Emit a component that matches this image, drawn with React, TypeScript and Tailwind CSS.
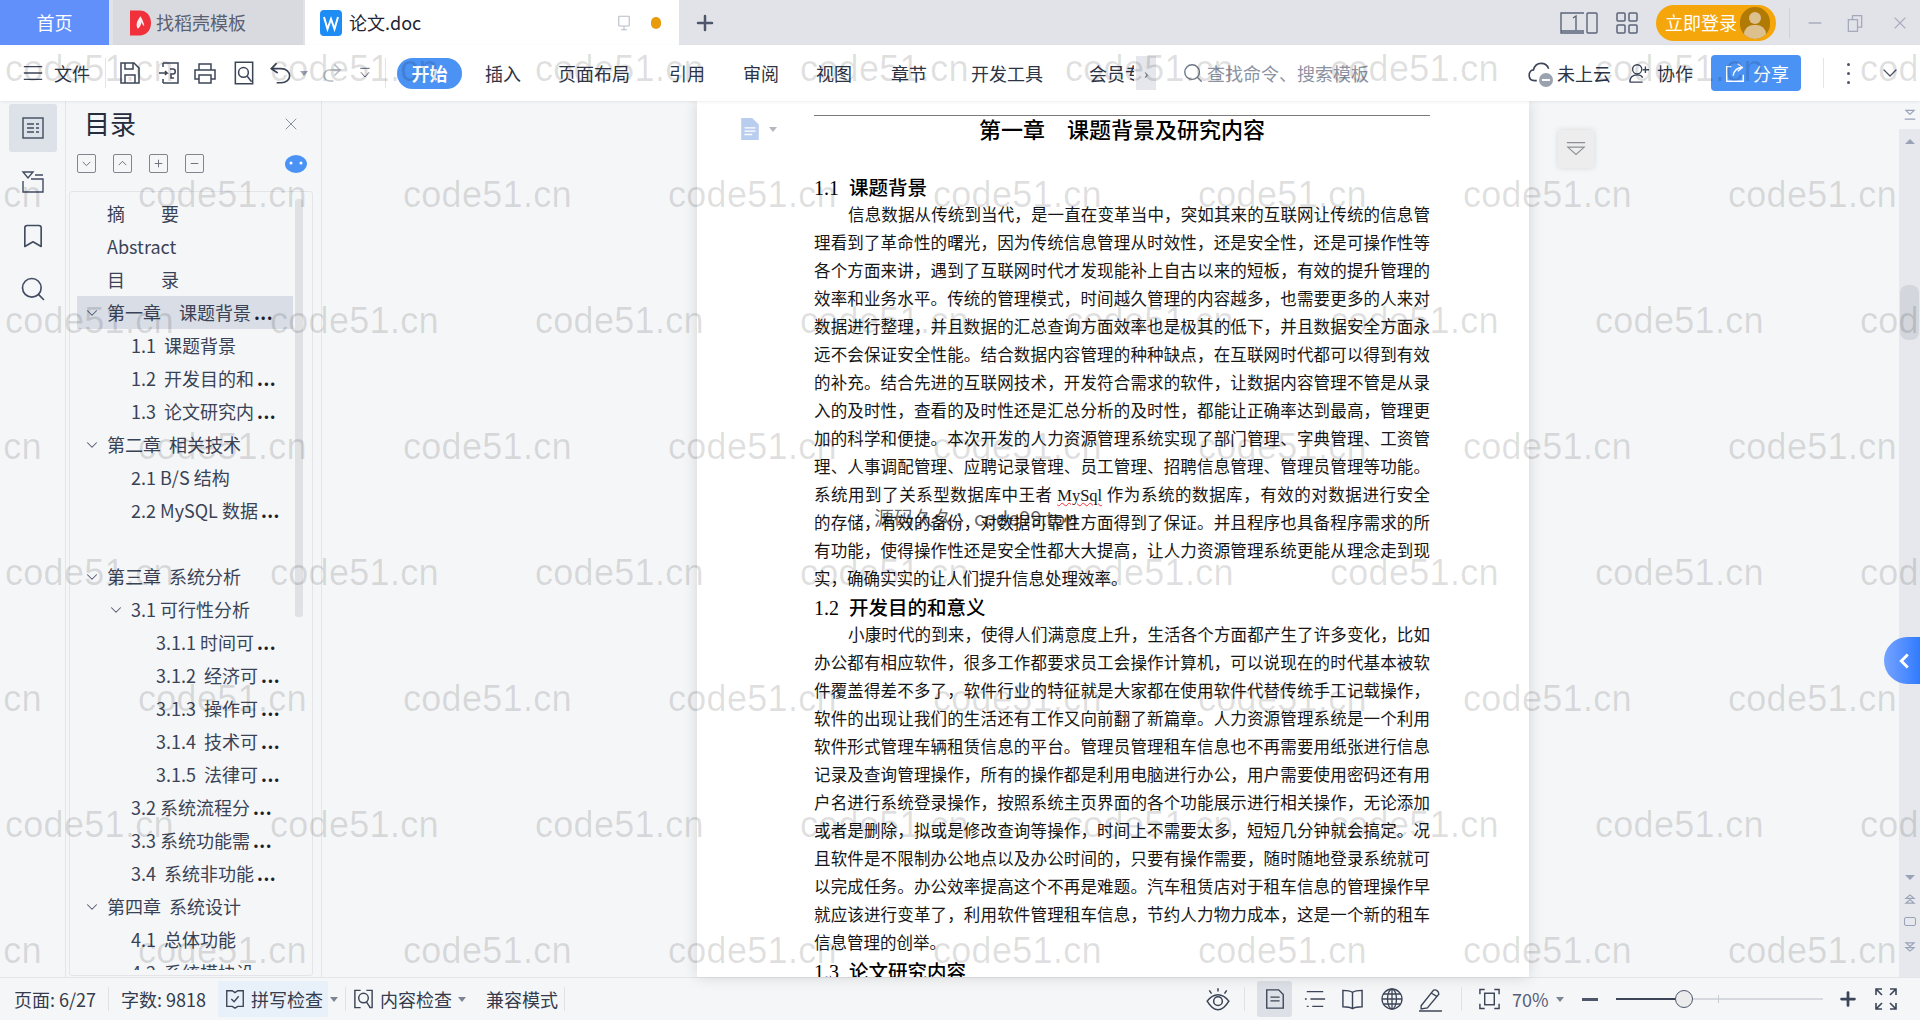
import { ChevronDown, X, Plus, Redo2, Search, Bookmark, Minus } from "lucide-react"

const SECTION_1 = [
  "理看到了革命性的曙光，因为传统信息管理从时效性，还是安全性，还是可操作性等",
  "各个方面来讲，遇到了互联网时代才发现能补上自古以来的短板，有效的提升管理的",
  "效率和业务水平。传统的管理模式，时间越久管理的内容越多，也需要更多的人来对",
  "数据进行整理，并且数据的汇总查询方面效率也是极其的低下，并且数据安全方面永",
  "远不会保证安全性能。结合数据内容管理的种种缺点，在互联网时代都可以得到有效",
  "的补充。结合先进的互联网技术，开发符合需求的软件，让数据内容管理不管是从录",
  "入的及时性，查看的及时性还是汇总分析的及时性，都能让正确率达到最高，管理更",
  "加的科学和便捷。本次开发的人力资源管理系统实现了部门管理、字典管理、工资管",
  "理、人事调配管理、应聘记录管理、员工管理、招聘信息管理、管理员管理等功能。",
]

const SECTION_1_END = [
  "的存储，有效的备份，对数据可靠性方面得到了保证。并且程序也具备程序需求的所",
  "有功能，使得操作性还是安全性都大大提高，让人力资源管理系统更能从理念走到现",
]

const SECTION_2 = [
  "办公都有相应软件，很多工作都要求员工会操作计算机，可以说现在的时代基本被软",
  "件覆盖得差不多了，软件行业的特征就是大家都在使用软件代替传统手工记载操作，",
  "软件的出现让我们的生活还有工作又向前翻了新篇章。人力资源管理系统是一个利用",
  "软件形式管理车辆租赁信息的平台。管理员管理租车信息也不再需要用纸张进行信息",
  "记录及查询管理操作，所有的操作都是利用电脑进行办公，用户需要使用密码还有用",
  "户名进行系统登录操作，按照系统主页界面的各个功能展示进行相关操作，无论添加",
  "或者是删除，拟或是修改查询等操作，时间上不需要太多，短短几分钟就会搞定。况",
  "且软件是不限制办公地点以及办公时间的，只要有操作需要，随时随地登录系统就可",
  "以完成任务。办公效率提高这个不再是难题。汽车租赁店对于租车信息的管理操作早",
  "就应该进行变革了，利用软件管理租车信息，节约人力物力成本，这是一个新的租车",
]

type TocRow = { level: 0 | 1 | 2; text: string; more?: boolean; open?: boolean; active?: boolean }

const TOC: TocRow[] = [
  { level: 0, text: "摘　　要" },
  { level: 0, text: "Abstract" },
  { level: 0, text: "目　　录" },
  { level: 0, text: "第一章　课题背景", more: true, open: true, active: true },
  { level: 1, text: "1.1  课题背景" },
  { level: 1, text: "1.2  开发目的和", more: true },
  { level: 1, text: "1.3  论文研究内", more: true },
  { level: 0, text: "第二章  相关技术", open: true },
  { level: 1, text: "2.1 B/S 结构" },
  { level: 1, text: "2.2 MySQL 数据", more: true },
  { level: 1, text: "" },
  { level: 0, text: "第三章  系统分析", open: true },
  { level: 1, text: "3.1 可行性分析", open: true },
  { level: 2, text: "3.1.1 时间可", more: true },
  { level: 2, text: "3.1.2  经济可", more: true },
  { level: 2, text: "3.1.3  操作可", more: true },
  { level: 2, text: "3.1.4  技术可", more: true },
  { level: 2, text: "3.1.5  法律可", more: true },
  { level: 1, text: "3.2 系统流程分", more: true },
  { level: 1, text: "3.3 系统功能需", more: true },
  { level: 1, text: "3.4  系统非功能", more: true },
  { level: 0, text: "第四章  系统设计", open: true },
  { level: 1, text: "4.1  总体功能" },
  { level: 1, text: "4.2  系统模块设" },
]

const LEVEL_PADDING = { 0: "pl-[30px]", 1: "pl-[54px]", 2: "pl-[79px]" }

const WATERMARK_ROWS = [0, 1, 2, 3, 4, 5, 6, 7]
const WATERMARK_COLS = [0, 1, 2, 3, 4, 5, 6, 7, 8]

function Line({ className = "", ...rest }: React.SVGProps<SVGSVGElement>) {
  return (
    <svg
      viewBox="0 0 24 24"
      fill="none"
      stroke="currentColor"
      strokeWidth="1.5"
      className={className}
      aria-hidden="true"
      {...rest}
    />
  )
}

function Caret({ className = "" }: { className?: string }) {
  return <span className={`inline-block w-0 h-0 border-x-[4px] border-x-transparent border-t-[5px] border-t-[#7d8595] ${className}`} />
}

function TabBar() {
  return (
    <div className="flex items-stretch h-[45px] bg-[#e2e3e8] shrink-0 text-[18px]">
      <div className="w-[109px] bg-[#6290fb] text-white flex items-center justify-center">首页</div>
      <div className="ml-[4px] w-[190px] bg-[#d9dadf] flex items-center pl-[17px] text-[#596072]">
        <svg viewBox="0 0 22 26" className="w-[21px] h-[26px] shrink-0" aria-hidden="true">
          <path d="M0 0h10c7 0 12 5 12 13s-5 13-12 13H0z" fill="#f0303a" />
          <path d="M11 6c-4 5-5 9-3 13 2-1 4-4 4-7 1 3 2 4 3 4-1-4-2-7-4-10z" fill="#fff" opacity="0.9" />
        </svg>
        <span className="ml-[5px]">找稻壳模板</span>
      </div>
      <div className="ml-[2px] w-[374px] bg-white flex items-center pl-[15px] text-[#1f2533]">
        <svg viewBox="0 0 22 26" className="w-[22px] h-[26px] shrink-0" aria-hidden="true">
          <rect width="22" height="26" rx="4" fill="#1e8cf5" />
          <path d="M4 7l3.5 12L11 9l3.5 10L18 7" fill="none" stroke="#fff" strokeWidth="2" />
        </svg>
        <span className="ml-[7px]">论文.doc</span>
        <Line className="ml-[194px] w-[18px] h-[20px] text-[#b8bdcb]">
          <rect x="5" y="3" width="14" height="13" rx="1" />
          <path d="M12 16v5M8 21h8" />
        </Line>
        <span className="ml-[18px] w-[10px] h-[12px] rounded-full bg-[#e89c0c]" />
      </div>
      <div className="ml-[14px] flex items-center">
        <Plus className="w-[24px] h-[24px] text-[#4e566c]" strokeWidth={2.5} />
      </div>
      <Line className="ml-[843px] self-center w-[38px] h-[24px] text-[#5b6478]" viewBox="0 0 38 24" strokeWidth="1.4">
        <path d="M24 2H1v20h23M1 20h23" />
        <rect x="27" y="2" width="10" height="20" rx="1" />
        <path d="M13 7l3-2v14" />
      </Line>
      <Line className="ml-[17px] self-center w-[24px] h-[24px] text-[#5b6478]">
        <rect x="2" y="2" width="8" height="8" rx="1" />
        <rect x="14" y="2" width="8" height="8" rx="1" />
        <rect x="2" y="14" width="8" height="8" rx="1" />
        <rect x="14" y="14" width="8" height="8" rx="1" />
      </Line>
      <div className="ml-[17px] self-center w-[120px] h-[36px] rounded-full bg-[#f5a60a] flex items-center pl-[9px] text-white">
        <span className="w-[75px]">立即登录</span>
        <span className="relative w-[30px] h-[32px] rounded-full bg-[#b07a04] overflow-hidden">
          <span className="absolute left-[9px] top-[5px] w-[12px] h-[12px] rounded-full bg-[#dcc08e]" />
          <span className="absolute left-[4px] top-[18px] w-[22px] h-[18px] rounded-full bg-[#dcc08e]" />
        </span>
      </div>
      <span className="ml-[13px] self-center w-px h-[30px] bg-[#d0d2d8]" />
      <Minus className="ml-[15px] self-center w-[20px] h-[20px] text-[#a9afbf]" />
      <Line className="ml-[20px] self-center w-[20px] h-[20px] text-[#a3a9ba]">
        <rect x="4" y="8" width="11" height="14" />
        <path d="M9 8V3h11v14h-5" />
      </Line>
      <X className="ml-[25px] self-center w-[20px] h-[20px] text-[#a9afbf]" strokeWidth={1.3} />
    </div>
  )
}

function Toolbar() {
  return (
    <div className="relative z-10 flex items-center h-[56px] bg-white shrink-0 text-[18px] text-[#2d3445] shadow-[0_1px_3px_rgba(0,0,0,0.07)]">
      <Line className="ml-[22px] w-[22px] h-[22px] text-[#3c4557]">
        <path d="M2 5h20M2 12h20M2 19h20" />
      </Line>
      <span className="ml-[10px] w-[36px]">文件</span>
      <span className="ml-[15px] w-px h-[30px] bg-[#e3e5ea]" />
      <Line className="ml-[12px] w-[24px] h-[26px] text-[#3c4557]">
        <path d="M3 2h13l5 5v15H3z" />
        <path d="M7 2v6h8V2M7 22v-8h10v8" />
      </Line>
      <Line className="ml-[15px] w-[24px] h-[26px] text-[#3c4557]">
        <path d="M6 2h15v20H6M6 2v4M6 18v4" />
        <path d="M2 12h8l-2-2M10 12l-2 2M13 8h3c3 0 3 5 0 5h-2v4h3" />
      </Line>
      <Line className="ml-[12px] w-[24px] h-[26px] text-[#3c4557]">
        <path d="M6 9V3h12v6M6 18H2V9h20v9h-4" />
        <rect x="6" y="14" width="12" height="8" />
      </Line>
      <Line className="ml-[14px] w-[26px] h-[28px] text-[#3c4557]" strokeWidth="1.4">
        <path d="M4 2h16v20H4z" />
        <circle cx="11.500" cy="11.500" r="4.500" />
        <path d="M15 15l4 5" />
      </Line>
      <Line className="ml-[11px] w-[26px] h-[28px] text-[#3c4557]">
        <path d="M8 3L3 8l6 4" />
        <path d="M3 8h9c5 0 8 3 8 6.500S17 21 12 21H8" />
      </Line>
      <Caret className="ml-[6px] !border-t-[#a0a6b3]" />
      <Redo2 className="ml-[12px] w-[24px] h-[26px] text-[#b9bdc6]" strokeWidth={1.5} />
      <Line className="ml-[13px] w-[16px] h-[18px] text-[#5b6478]">
        <path d="M5 5h14M6 11l6 7 6-7" />
      </Line>
      <span className="ml-[12px] w-px h-[30px] bg-[#e3e5ea]" />
      <span className="ml-[11px] w-[65px] h-[31px] rounded-full bg-[#4a92f4] text-white font-bold flex items-center justify-center">开始</span>
      <span className="ml-[23px] w-[36px]">插入</span>
      <span className="ml-[37px] w-[72px]">页面布局</span>
      <span className="ml-[39px] w-[36px]">引用</span>
      <span className="ml-[38px] w-[36px]">审阅</span>
      <span className="ml-[37px] w-[36px]">视图</span>
      <span className="ml-[39px] w-[36px]">章节</span>
      <span className="ml-[44px] w-[72px]">开发工具</span>
      <span className="ml-[46px] w-[45px] overflow-hidden whitespace-nowrap">会员专享</span>
      <span className="ml-[2px] w-[20px] h-[34px] bg-[#e5e7ec] flex items-center justify-center text-[14px] text-[#4c5465]">›</span>
      <Search className="ml-[26px] w-[22px] h-[22px] text-[#6e7686]" strokeWidth={1.5} />
      <span className="ml-[3px] w-[162px] whitespace-nowrap text-[#8b93a3]">查找命令、搜索模板</span>
      <div className="relative ml-[158px] w-[26px] h-[28px] text-[#3c4557]">
        <Line className="w-[26px] h-[26px]">
          <path d="M9 20H7c-3 0-5-2-5-5s2-5 4-5c1-4 4-6 7-6s6 2 7 5" />
        </Line>
        <span className="absolute right-0 bottom-0 w-[14px] h-[14px] rounded-full bg-[#9aa2b0] flex items-center justify-center">
          <span className="w-[8px] h-[2px] bg-white" />
        </span>
      </div>
      <span className="ml-[4px] w-[54px]">未上云</span>
      <Line className="ml-[17px] w-[22px] h-[24px] text-[#3c4557]">
        <circle cx="10" cy="8" r="5" />
        <path d="M2 22c0-5 3-8 8-8 3 0 5 1 6 3M2 22h14M19 5v7M16 8.500h7" />
      </Line>
      <span className="ml-[7px] w-[36px]">协作</span>
      <div className="ml-[18px] w-[90px] h-[36px] rounded-[4px] bg-[#4a92f4] text-white flex items-center pl-[13px]">
        <Line className="w-[22px] h-[22px]">
          <path d="M8 5H3v16h18v-7M10 15c1-6 5-9 10-9M15 2l5 4-5 4" />
        </Line>
        <span className="ml-[7px]">分享</span>
      </div>
      <span className="ml-[22px] w-px h-[30px] bg-[#e3e5ea]" />
      <span className="ml-[23px] flex flex-col gap-[6px]">
        <span className="w-[3px] h-[3px] rounded-full bg-[#4c5465]" />
        <span className="w-[3px] h-[3px] rounded-full bg-[#4c5465]" />
        <span className="w-[3px] h-[3px] rounded-full bg-[#4c5465]" />
      </span>
      <ChevronDown className="ml-[28px] w-[24px] h-[24px] text-[#4c5465]" strokeWidth={1.3} />
    </div>
  )
}

function Rail() {
  return (
    <div className="w-[66px] shrink-0 border-r border-[#e3e5ea] flex flex-col items-center pt-[3px] text-[#414b60]">
      <div className="w-[48px] h-[48px] rounded-[3px] bg-[#dde1e8] flex items-center justify-center">
        <Line className="w-[24px] h-[26px]" strokeWidth="1.4">
          <rect x="2" y="2" width="20" height="20" />
          <path d="M6 8h7M15 8h3M6 12h7M15 12h3M6 16h7M15 16h3" />
        </Line>
      </div>
      <Line className="mt-[18px] w-[24px] h-[24px]" strokeWidth="1.4">
        <path d="M2 2h10L7 8zM14 5h8M2 11v11h20V9H10" />
      </Line>
      <Bookmark className="mt-[28px] w-[28px] h-[28px]" strokeWidth={1.4} />
      <Search className="mt-[25px] w-[28px] h-[28px]" strokeWidth={1.4} />
    </div>
  )
}

function SquareIcon({ children }: { children: React.ReactNode }) {
  return (
    <span className="w-[19px] h-[19px] rounded-[2px] border border-[#80858e] flex items-center justify-center text-[#6b7079]">
      <Line className="w-[13px] h-[13px]" strokeWidth="1.8">{children}</Line>
    </span>
  )
}

function TocPanel() {
  return (
    <div className="w-[256px] shrink-0 border-r border-[#e3e5ea] flex flex-col">
      <div className="h-[42px] flex items-center pl-[18px] pr-[20px] justify-between">
        <span className="text-[26px] text-[#252d3d]">目录</span>
        <X className="mt-[4px] w-[20px] h-[20px] text-[#7d8595]" strokeWidth={1.1} />
      </div>
      <div className="h-[48px] flex items-start pl-[11px] pt-[11px]">
        <span className="flex gap-[17px]">
          <SquareIcon><path d="M5 9l7 7 7-7" /></SquareIcon>
          <SquareIcon><path d="M5 15l7-7 7 7" /></SquareIcon>
          <SquareIcon><path d="M12 5v14M5 12h14" /></SquareIcon>
          <SquareIcon><path d="M5 12h14" /></SquareIcon>
        </span>
        <svg viewBox="0 0 22 18" className="ml-[81px] mt-[1px] w-[22px] h-[18px]" aria-hidden="true">
          <ellipse cx="11" cy="9" rx="11" ry="9" fill="#4a92f4" />
          <circle cx="6" cy="8" r="1.500" fill="#fff" />
          <circle cx="16" cy="8" r="1.500" fill="#fff" />
        </svg>
      </div>
      <div className="ml-[3px] w-[244px] h-[785px] border border-[#e3e5ea] rounded-[3px] flex items-start pl-[7px] pt-[5px] text-[18px] text-[#3a4356]">
        <div className="w-[216px] h-[773px] overflow-hidden">
          {TOC.map((row, i) => (
            <div
              key={i}
              className={`h-[33px] flex items-center whitespace-pre ${LEVEL_PADDING[row.level]} ${row.active ? "bg-[#d8dde6]" : ""}`}
            >
              {row.open && (
                <ChevronDown className="-ml-[24px] mr-[6px] w-[18px] h-[18px] shrink-0 text-[#4e566c]" strokeWidth={1.4} />
              )}
              <span>{row.text}</span>
              {row.more && <span className="ml-[3px] font-bold text-[#1a1f2b] tracking-[0.5px]">...</span>}
            </div>
          ))}
        </div>
        <div className="ml-[2px] mt-[2px] w-[8px] h-[418px] rounded-[3px] bg-[#dfe1e5]" />
      </div>
    </div>
  )
}

function BodyLine({ children }: { children: React.ReactNode }) {
  return <p className="h-[28px] leading-[28px] text-justify [text-align-last:justify] overflow-hidden">{children}</p>
}

function SectionTitle({ num, title }: { num: string; title: string }) {
  return (
    <h2 className="h-[28px] leading-[28px] text-[19.5px] font-medium text-black">
      <span className="text-[20px]">{num}</span>
      <span className="ml-[10px]">{title}</span>
    </h2>
  )
}

function Page() {
  return (
    <div className="relative ml-[375px] w-[832px] h-full bg-white overflow-hidden pl-[117px] pr-[99px] shadow-[0_0_14px_rgba(0,0,0,0.14)] [font-family:'Liberation_Serif','Noto_Sans_CJK_SC',serif] text-[16.500px] text-[#161616]">
      <svg viewBox="0 0 16 20" className="absolute left-[44px] top-[17px] w-[18px] h-[22px]" aria-hidden="true">
        <path d="M0 0h10l6 6v14H0z" fill="#b9cdee" />
        <path d="M3 9h10M3 12h10M3 15h7" stroke="#fff" strokeWidth="1.2" />
      </svg>
      <Caret className="absolute left-[72px] top-[26px] !border-t-[#b4b8c0]" />
      <div className="mt-[14px] h-px bg-[#7a7a7a]" />
      <h1 className="h-[29px] leading-[29px] mb-[29px] text-center text-[22px] font-medium text-black whitespace-pre">第一章　课题背景及研究内容</h1>

      <SectionTitle num="1.1" title="课题背景" />
      <div className="pl-[34px]"><BodyLine>信息数据从传统到当代，是一直在变革当中，突如其来的互联网让传统的信息管</BodyLine></div>
      {SECTION_1.map((t) => <BodyLine key={t}>{t}</BodyLine>)}
      <BodyLine>
        系统用到了关系型数据库中王者 <span className="underline decoration-wavy decoration-red-500 decoration-1">MySql</span> 作为系统的数据库，有效的对数据进行安全
      </BodyLine>
      {SECTION_1_END.map((t) => <BodyLine key={t}>{t}</BodyLine>)}
      <p className="h-[28px] leading-[28px]">实，确确实实的让人们提升信息处理效率。</p>

      <SectionTitle num="1.2" title="开发目的和意义" />
      <div className="pl-[34px]"><BodyLine>小康时代的到来，使得人们满意度上升，生活各个方面都产生了许多变化，比如</BodyLine></div>
      {SECTION_2.map((t) => <BodyLine key={t}>{t}</BodyLine>)}
      <p className="h-[28px] leading-[28px]">信息管理的创举。</p>

      <SectionTitle num="1.3" title="论文研究内容" />

      <span className="absolute left-[177px] top-[403px] text-[20px] leading-[28px] text-black/60 [font-family:'Noto_Sans_CJK_SC',sans-serif]">源码久久：code99.top</span>
    </div>
  )
}

function DocScrollbar() {
  return (
    <div className="w-[21px] shrink-0 flex flex-col text-[#9aa2b8]">
      <div className="h-[28px] flex items-center justify-center">
        <Line className="w-[14px] h-[14px]" strokeWidth="2">
          <path d="M5 4h14l-7 7zM3 19h18" />
        </Line>
      </div>
      <div className="flex-1 bg-[#e6e8ed] flex flex-col items-center">
        <span className="mt-[10px] w-0 h-0 border-x-[5px] border-x-transparent border-b-[5px] border-b-[#9aa2b8]" />
        <span className="mt-[141px] w-[19px] h-[55px] rounded-[8px] bg-[#d3d6dd]" />
        <span className="mt-[535px] w-0 h-0 border-x-[5px] border-x-transparent border-t-[5px] border-t-[#9aa2b8]" />
        <Line className="mt-[12px] w-[14px] h-[14px]" strokeWidth="2">
          <path d="M5 11l7-6 7 6zM5 19l7-6 7 6z" />
        </Line>
        <span className="mt-[11px] w-[12px] h-[9px] rounded-[2px] border-[1.5px] border-[#9aa2b8]" />
        <Line className="mt-[14px] w-[14px] h-[14px]" strokeWidth="2">
          <path d="M5 5l7 6 7-6zM5 13l7 6 7-6z" />
        </Line>
      </div>
    </div>
  )
}

function Main() {
  return (
    <div className="flex flex-1 min-h-0 bg-[#f5f6f8] [font-family:'Noto_Sans_CJK_SC',sans-serif]">
      <Rail />
      <TocPanel />
      <div className="relative flex-1 min-w-0">
        <Page />
        <div className="absolute left-[1236px] top-[29px] w-[36px] h-[38px] bg-[#ededee] shadow-[0_0_6px_rgba(0,0,0,0.12)] flex items-center justify-center text-[#8d8f94]">
          <Line className="w-[22px] h-[22px]" strokeWidth="1.2">
            <path d="M2 5h20M3 10h18l-9 8z" />
          </Line>
        </div>
      </div>
      <DocScrollbar />
    </div>
  )
}

function StatusBar() {
  return (
    <div className="flex items-center h-[43px] bg-[#f5f6f8] border-t border-[#e3e5e9] shrink-0 text-[18px] text-[#333b4c]">
      <span className="ml-[14px] w-[86px] whitespace-nowrap">页面: 6/27</span>
      <span className="ml-[8px] w-px h-[24px] bg-[#e0e2e7]" />
      <span className="ml-[12px] w-[89px] whitespace-nowrap">字数: 9818</span>
      <div className="ml-[8px] w-[110px] h-[36px] bg-[#e8f0fa] flex items-center pl-[6px]">
        <Line className="w-[22px] h-[26px] shrink-0 text-[#3c4557]">
          <path d="M3 3h6l3 2 3-2h6v17h-6l-3 2-3-2H3z" />
          <path d="M8 12l3 3 5-6" />
        </Line>
        <span className="ml-[5px] whitespace-nowrap">拼写检查</span>
      </div>
      <Caret className="ml-[2px]" />
      <span className="ml-[7px] w-px h-[24px] bg-[#e0e2e7]" />
      <Line className="ml-[6px] w-[23px] h-[26px] shrink-0 text-[#3c4557]">
        <path d="M9 3H3v18h6M15 3h6v18h-3" />
        <circle cx="12" cy="11" r="5" />
        <path d="M15 15l4 6" />
      </Line>
      <span className="ml-[5px] w-[72px] whitespace-nowrap">内容检查</span>
      <Caret className="ml-[6px]" />
      <span className="ml-[20px] w-[72px] whitespace-nowrap">兼容模式</span>
      <span className="ml-[6px] w-px h-[24px] bg-[#e0e2e7]" />

      <Line className="ml-[640px] w-[26px] h-[26px] shrink-0 text-[#3c4557]" strokeWidth="1.4">
        <path d="M2 14c3-4 6-6 10-6s7 2 10 6c-3 5-6 8-10 8s-7-3-10-8z" />
        <circle cx="12" cy="14" r="4" />
        <path d="M4 4l2 3M12 2v3M20 4l-2 3" />
      </Line>
      <span className="ml-[13px] w-px h-[24px] bg-[#e0e2e7]" />
      <div className="ml-[12px] w-[35px] h-[36px] rounded-[3px] bg-[#dde0e6] flex items-center justify-center">
        <Line className="w-[22px] h-[26px] text-[#3c4557]">
          <path d="M3 2h13l5 5v15H3zM7 10h10M7 14h10" />
        </Line>
      </div>
      <Line className="ml-[12px] w-[22px] h-[24px] shrink-0 text-[#3c4557]">
        <path d="M3 4h18M1 12h2M7 12h16M3 20h2M9 20h12M1 4h0" />
      </Line>
      <Line className="ml-[15px] w-[23px] h-[26px] shrink-0 text-[#3c4557]">
        <path d="M12 5c-3-2-6-2-10-2v17c4 0 7 0 10 2 3-2 6-2 10-2V3c-4 0-7 0-10 2zM12 5v17" />
      </Line>
      <Line className="ml-[16px] w-[24px] h-[24px] shrink-0 text-[#3c4557]" strokeWidth="1.3">
        <circle cx="12" cy="12" r="10" />
        <ellipse cx="12" cy="12" rx="4.500" ry="10" />
        <path d="M12 2v20M2 12h20M3.500 7h17M3.500 17h17" />
      </Line>
      <Line className="ml-[14px] w-[25px] h-[25px] shrink-0 text-[#3c4557]" strokeWidth="1.3">
        <path d="M3 18L15 3c2-1 5 1 5 4L9 20l-6 1zM13 6l5 3M1 23h22" />
      </Line>
      <span className="ml-[18px] w-px h-[24px] bg-[#e0e2e7]" />
      <Line className="ml-[16px] w-[23px] h-[24px] shrink-0 text-[#3c4557]" strokeWidth="1.5">
        <path d="M2 7V2h5M17 2h5v5M22 17v5h-5M7 22H2v-5" />
        <rect x="7" y="6" width="10" height="12" />
      </Line>
      <span className="ml-[11px] w-[38px] whitespace-nowrap text-[#56607a]">70%</span>
      <Caret className="ml-[6px]" />
      <span className="ml-[18px] w-[16px] h-[3px] bg-[#4e566c]" />
      <div className="relative ml-[18px] w-[207px] h-[2px] bg-[#d6d9df]">
        <div className="w-[60px] h-[2px] bg-[#3c4557]" />
        <span className="absolute left-[102px] -top-[3px] w-px h-[8px] bg-[#c8ccd3]" />
        <span className="absolute left-[59px] -top-[8px] w-[18px] h-[18px] rounded-full border border-[#4e566c] bg-[#ececec]" />
      </div>
      <Plus className="ml-[14px] w-[22px] h-[22px] text-[#3c4557]" strokeWidth={3} />
      <Line className="ml-[15px] w-[24px] h-[24px] shrink-0 text-[#3c4557]" strokeWidth="1.6">
        <path d="M2 8V2h6M2 2l6 6M22 8V2h-6M22 2l-6 6M2 16v6h6M2 22l6-6M22 16v6h-6M22 22l-6-6" />
      </Line>
    </div>
  )
}

export default function App() {
  return (
    <div className="relative w-screen h-screen overflow-hidden flex flex-col bg-white [font-family:'Noto_Sans_CJK_SC',sans-serif]">
      <TabBar />
      <Toolbar />
      <Main />
      <StatusBar />

      {/* blue tab over the scrollbar */}
      <div className="absolute right-0 top-[637px] z-20 w-[36px] h-[47px] rounded-l-full bg-gradient-to-r from-[#74a2ff] to-[#2f7bff] flex items-center justify-end pr-[4px] text-white">
        <Line className="w-[22px] h-[22px]" strokeWidth="3.2">
          <path d="M15 5l-7 7 7 7" />
        </Line>
      </div>

      {/* watermark layer */}
      <div className="absolute inset-0 z-30 pointer-events-none overflow-hidden">
        {WATERMARK_ROWS.map((r) =>
          WATERMARK_COLS.map((c) => (
            <span
              key={`${r}-${c}`}
              className="absolute text-[36px] leading-[40px] tracking-[0.3px] text-black/[0.12] [font-family:'Liberation_Sans',sans-serif]"
              style={{ top: 49 + 126 * r, left: (r % 2 === 0 ? 5 : -127) + 265 * c }}
            >
              code51.cn
            </span>
          )),
        )}
      </div>
    </div>
  )
}
